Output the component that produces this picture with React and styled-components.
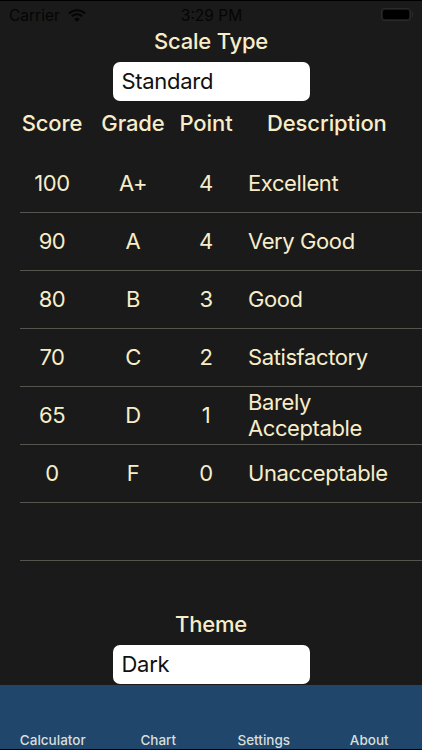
import React from 'react';
import styled, { createGlobalStyle } from 'styled-components';

const GlobalStyle = createGlobalStyle`
  html, body {
    margin: 0;
    padding: 0;
    background: #1a1a1a;
  }
  * {
    box-sizing: border-box;
  }
`;

const cream = '#f7edc9';

const Screen = styled.div`
  width: 422px;
  height: 750px;
  overflow: hidden;
  display: flex;
  flex-direction: column;
  background: #1a1a1a;
  color: ${cream};
  font-family: Inter, "Noto Sans", "Liberation Sans", sans-serif;
  border-top: 1px solid #000;
  border-bottom: 1px solid #000;
`;
const StatusBar = styled.div`
  height: 26px;
  flex: none;
  display: grid;
  grid-template-columns: 1fr auto 1fr;
  align-items: center;
  padding: 3px 8px 0 9px;
  color: #050505;
  font-size: 15.5px;
`;
const Carrier = styled.div`
  display: flex;
  align-items: center;
  gap: 8px;
`;
const Battery = styled.div`
  justify-self: end;
  position: relative;
  width: 30px;
  height: 13px;
  border: 1px solid #2a2a2a;
  border-radius: 3px;
  padding: 1px;
  margin: -2px 3px 0 0;

  &::after {
    content: '';
    position: absolute;
    top: 3px;
    right: -3px;
    width: 1px;
    height: 5px;
    background: #2a2a2a;
  }
`;
const BatteryFill = styled.div`
  height: 100%;
  background: #000;
  border-radius: 2px;
`;
const SectionTitle = styled.div`
  text-align: center;
  font-size: 22px;
  font-weight: 500;
  letter-spacing: -0.2px;
  line-height: 28px;
`;
const SelectBox = styled.div`
  align-self: center;
  width: 197px;
  height: 39px;
  flex: none;
  margin-top: 7px;
  padding: 0 0 1px 9px;
  display: flex;
  align-items: center;
  background: #fff;
  border-radius: 7px;
  color: #111;
  font-size: 22px;
  letter-spacing: -0.3px;
`;
const HeaderRow = styled.div`
  display: grid;
  grid-template-columns: 64px 98px 48px 1fr;
  height: 30px;
  margin-top: 7px;
  margin-left: 20px;
  align-items: center;
  font-size: 22px;
  font-weight: 500;
  letter-spacing: -0.1px;
  white-space: nowrap;
`;
const HeaderCell = styled.div`
  display: flex;
  justify-content: center;
`;
const HeaderDescription = styled.div`
  padding-left: 37px;
`;
const Table = styled.div`
  margin-top: 17px;
  margin-left: 20px;
  display: flex;
  flex-direction: column;
`;
const Row = styled.div`
  display: grid;
  grid-template-columns: 64px 98px 48px 1fr;
  height: 58px;
  padding-bottom: 2px;
  align-items: center;
  border-bottom: 1px solid #55554f;
  font-size: 22px;
  letter-spacing: -0.4px;
`;
const Cell = styled.div`
  text-align: center;
`;
const DescriptionCell = styled.div`
  padding-left: 18px;
  line-height: 26px;
`;
const ThemeBlock = styled.div`
  display: flex;
  flex-direction: column;
  margin-top: 49px;
`;
const TabBar = styled.div`
  margin-top: 1px;
  flex: none;
  height: 64px;
  display: grid;
  grid-template-columns: repeat(4, 1fr);
  align-items: end;
  background: #20466c;
`;
const TabLabel = styled.div`
  text-align: center;
  color: #d8dfda;
  font-size: 13.5px;
  font-weight: 500;
  line-height: 18px;
`;

const grades = [
  ['100', 'A+', '4', 'Excellent'],
  ['90', 'A', '4', 'Very Good'],
  ['80', 'B', '3', 'Good'],
  ['70', 'C', '2', 'Satisfactory'],
  ['65', 'D', '1', 'Barely Acceptable'],
  ['0', 'F', '0', 'Unacceptable'],
  ['', '', '', ''],
];

function WifiIcon() {
  return (
    <svg width="18" height="13" viewBox="0 0 18 13" fill="none" stroke="#050505" strokeWidth="2">
      <path d="M1 4.500 A11.500 11.500 0 0 1 17 4.500" />
      <path d="M3.800 7.300 A7.500 7.500 0 0 1 14.200 7.300" />
      <path d="M9 13 L6.200 10 A4 4 0 0 1 11.800 10 Z" fill="#050505" stroke="none" />
    </svg>
  );
}

export default function App() {
  return (
    <Screen>
      <GlobalStyle />
      <StatusBar>
        <Carrier>
          Carrier <WifiIcon />
        </Carrier>
        <div>3:29 PM</div>
        <Battery>
          <BatteryFill />
        </Battery>
      </StatusBar>
      <SectionTitle>Scale Type</SectionTitle>
      <SelectBox>Standard</SelectBox>
      <HeaderRow>
        <HeaderCell>Score</HeaderCell>
        <HeaderCell>Grade</HeaderCell>
        <HeaderCell>Point</HeaderCell>
        <HeaderDescription>Description</HeaderDescription>
      </HeaderRow>
      <Table>
        {grades.map((g, i) => (
          <Row key={i}>
            <Cell>{g[0]}</Cell>
            <Cell>{g[1]}</Cell>
            <Cell>{g[2]}</Cell>
            <DescriptionCell>{g[3]}</DescriptionCell>
          </Row>
        ))}
      </Table>
      <ThemeBlock>
        <SectionTitle>Theme</SectionTitle>
        <SelectBox>Dark</SelectBox>
      </ThemeBlock>
      <TabBar>
        <TabLabel>Calculator</TabLabel>
        <TabLabel>Chart</TabLabel>
        <TabLabel>Settings</TabLabel>
        <TabLabel>About</TabLabel>
      </TabBar>
    </Screen>
  );
}
